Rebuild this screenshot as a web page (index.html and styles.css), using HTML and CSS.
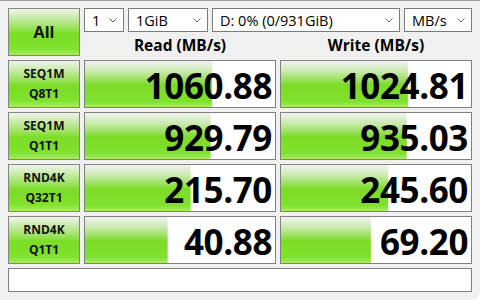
FILE: index.html
```html
<!DOCTYPE html>
<html lang="en">
<head>
    <meta charset="UTF-8">
    <meta name="viewport" content="width=device-width, initial-scale=1.0">
    <title>CrystalDiskMark</title>
    <link rel="stylesheet" href="styles.css">
</head>
<body>

    <!-- Ventana principal -->
    <div class="window">
        <div class="bench-grid">

            <!-- Fila superior: botón All, combos y cabeceras -->
            <button class="test-btn all-btn">All</button>
            <div class="top-panel">
                <div class="combo-row">
                    <div class="combo combo-count">
                        <span>1</span>
                        <svg class="chevron" width="8" height="5" viewBox="0 0 8 5"><polyline points="0.5,0.5 4,4 7.5,0.5" fill="none" stroke="#606060" stroke-width="1"/></svg>
                    </div>
                    <div class="combo combo-size">
                        <span>1GiB</span>
                        <svg class="chevron" width="8" height="5" viewBox="0 0 8 5"><polyline points="0.5,0.5 4,4 7.5,0.5" fill="none" stroke="#606060" stroke-width="1"/></svg>
                    </div>
                    <div class="combo combo-drive">
                        <span>D: 0% (0/931GiB)</span>
                        <svg class="chevron" width="8" height="5" viewBox="0 0 8 5"><polyline points="0.5,0.5 4,4 7.5,0.5" fill="none" stroke="#606060" stroke-width="1"/></svg>
                    </div>
                    <div class="combo combo-unit">
                        <span>MB/s</span>
                        <svg class="chevron" width="8" height="5" viewBox="0 0 8 5"><polyline points="0.5,0.5 4,4 7.5,0.5" fill="none" stroke="#606060" stroke-width="1"/></svg>
                    </div>
                </div>
                <div class="col-headers">
                    <div class="col-title">Read (MB/s)</div>
                    <div class="col-title">Write (MB/s)</div>
                </div>
            </div>

            <!-- Resultados -->
            <button class="test-btn">SEQ1M<br>Q8T1</button>
            <div class="result" style="background-size: 67.1% 100%;">1060.88</div>
            <div class="result" style="background-size: 66.8% 100%;">1024.81</div>

            <button class="test-btn">SEQ1M<br>Q1T1</button>
            <div class="result" style="background-size: 66.1% 100%;">929.79</div>
            <div class="result" style="background-size: 66.2% 100%;">935.03</div>

            <button class="test-btn">RND4K<br>Q32T1</button>
            <div class="result" style="background-size: 55.6% 100%;">215.70</div>
            <div class="result" style="background-size: 56.5% 100%;">245.60</div>

            <button class="test-btn">RND4K<br>Q1T1</button>
            <div class="result" style="background-size: 43.5% 100%;">40.88</div>
            <div class="result" style="background-size: 47.3% 100%;">69.20</div>

            <!-- Barra de estado -->
            <div class="status-bar"></div>
        </div>
    </div>

</body>
</html>
```

FILE: styles.css
```css
/* Estilos generales */
html {
    background-color: #ffffff;
}

body {
    margin: 0;
    padding: 0;
    font-family: "Open Sans", "Noto Sans", sans-serif;
    color: #000;
}

/* Ventana */
.window {
    box-sizing: border-box;
    width: 480px;
    height: 300px;
    background-color: #f0f0f0;
    border-top: 1px solid #a0a0a0;
    border-bottom-right-radius: 8px;
    padding: 7px 8px 0 8px;
}

.bench-grid {
    display: grid;
    grid-template-columns: 72px 192px 192px;
    grid-template-rows: 48px 48px 48px 48px 48px 24px;
    gap: 4px;
}

/* Botones verdes de la izquierda */
.test-btn {
    box-sizing: border-box;
    margin: 0;
    padding: 0;
    border: 1px solid #858585;
    background: linear-gradient(to bottom, #eef3ea 0%, #c4eaa2 22%, #8fe04a 46%, #7cdc28 52%, #80e22c 86%, #a4ee66 100%);
    font-family: "Open Sans", "Noto Sans", sans-serif;
    font-size: 12px;
    font-weight: bold;
    line-height: 20px;
    color: #111;
    text-align: center;
}

.all-btn {
    font-size: 16px;
}

/* Panel superior */
.top-panel {
    grid-column: 2 / 4;
    display: flex;
    flex-direction: column;
}

.combo-row {
    display: flex;
    gap: 4px;
}

.combo {
    box-sizing: border-box;
    height: 24px;
    display: flex;
    align-items: center;
    justify-content: space-between;
    padding: 0 6px 0 7px;
    background-color: #fff;
    border: 1px solid #7a7a7a;
    font-size: 14.5px;
}

.combo-count {
    width: 40px;
}

.combo-size {
    width: 80px;
}

.combo-drive {
    width: 188px;
}

.combo-unit {
    width: 68px;
}

.col-headers {
    display: grid;
    grid-template-columns: 192px 192px;
    gap: 4px;
}

.col-title {
    height: 24px;
    line-height: 26px;
    text-align: center;
    font-size: 15.5px;
    font-weight: bold;
}

/* Celdas de resultados */
.result {
    box-sizing: border-box;
    display: flex;
    align-items: center;
    justify-content: flex-end;
    padding: 2px 3px 0 0;
    border: 1px solid #808080;
    background-color: #fff;
    background-image: linear-gradient(to bottom, #f2f2f2 0%, #cbeab0 22%, #92df50 44%, #7cdb28 52%, #80e12c 88%, #a6ee6a 100%);
    background-repeat: no-repeat;
    font-size: 35px;
    font-weight: bold;
    letter-spacing: -0.4px;
}

/* Barra de estado */
.status-bar {
    grid-column: 1 / 4;
    background-color: #fff;
    border: 1px solid #808080;
}
```
